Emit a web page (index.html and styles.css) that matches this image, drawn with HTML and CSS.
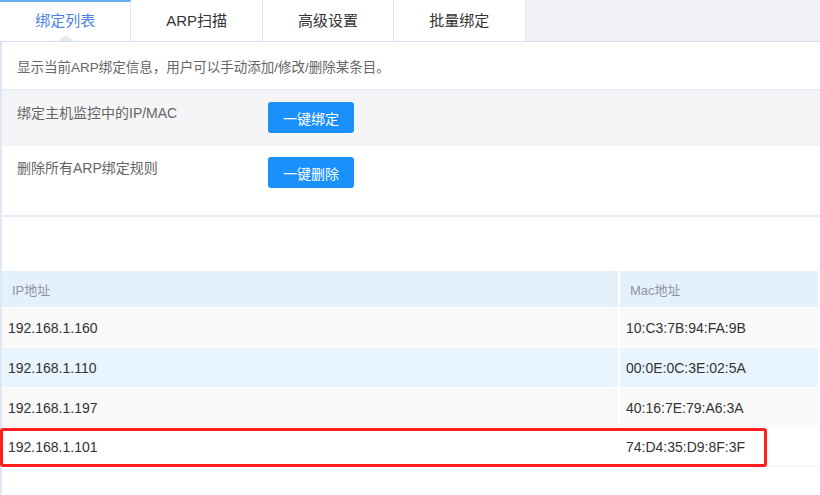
FILE: index.html
```html
<!DOCTYPE html>
<html lang="zh-CN">
<head>
<meta charset="utf-8">
<title>ARP绑定</title>
<link rel="stylesheet" href="styles.css">
</head>
<body>
<div class="tabs">
  <div class="tab active">绑定列表</div>
  <div class="tab">ARP扫描</div>
  <div class="tab">高级设置</div>
  <div class="tab">批量绑定</div>
</div>
<div class="panel">
  <div class="desc">显示当前ARP绑定信息，用户可以手动添加/修改/删除某条目。</div>
  <div class="actions">
    <div class="action gray">
      <div class="label">绑定主机监控中的IP/MAC</div>
      <button class="btn">一键绑定</button>
    </div>
    <div class="action white">
      <div class="label">删除所有ARP绑定规则</div>
      <button class="btn">一键删除</button>
    </div>
  </div>
  <div class="table-wrap">
    <table class="list">
      <thead>
        <tr><th class="c1">IP地址</th><th>Mac地址</th></tr>
      </thead>
      <tbody>
        <tr class="odd"><td>192.168.1.160</td><td>10:C3:7B:94:FA:9B</td></tr>
        <tr class="even"><td>192.168.1.110</td><td>00:0E:0C:3E:02:5A</td></tr>
        <tr class="odd"><td>192.168.1.197</td><td>40:16:7E:79:A6:3A</td></tr>
        <tr class="last"><td>192.168.1.101</td><td>74:D4:35:D9:8F:3F</td></tr>
      </tbody>
    </table>
    <div class="highlight"></div>
  </div>
</div>
</body>
</html>
```
FILE: styles.css
```css
* { box-sizing: border-box; }
html, body {
  margin: 0;
  padding: 0;
  background: #ffffff;
  font-family: "Liberation Sans", "Noto Sans CJK SC", sans-serif;
  color: #333;
  width: 820px;
  height: 495px;
  overflow: hidden;
}
.tabs {
  display: flex;
  height: 42px;
  background: #f0f1f5;
  border-bottom: 1px solid #d5def0;
}
.tab {
  position: relative;
  width: 131.4px;
  background: #ffffff;
  border-right: 1px solid #e3e6ed;
  font-size: 15px;
  color: #333;
  text-align: center;
  padding-top: 10px;
  line-height: 22px;
}
.tab.active {
  color: #4c82e2;
  border-top: 2px solid #6aaeea;
  padding-top: 8px;
}
.tab.active::after {
  content: "";
  position: absolute;
  left: 58px;
  bottom: 0;
  width: 0;
  height: 0;
  border-left: 8px solid transparent;
  border-right: 8px solid transparent;
  border-bottom: 6px solid #e6eaf3;
}
.panel {
  border-left: 2px solid #dfe6f6;
  height: 453px;
}
.desc {
  height: 49px;
  padding: 17px 0 0 15px;
  font-size: 13.5px;
  line-height: 18px;
  color: #666;
  border-bottom: 2px solid #e8edf8;
}
.actions {
  border-bottom: 2px solid #e8eef9;
}
.action {
  display: flex;
  align-items: flex-start;
}
.action.gray {
  background: #f5f5f8;
  height: 55px;
  padding-top: 11px;
}
.action.white {
  background: #ffffff;
  height: 69px;
  padding-top: 11px;
}
.label {
  width: 266px;
  padding-left: 15px;
  padding-top: 2px;
  font-size: 14px;
  line-height: 19px;
  color: #666;
}
.btn {
  width: 86px;
  height: 31px;
  border: none;
  border-radius: 3px;
  background: #1a90fb;
  color: #ffffff;
  font-family: "Liberation Sans", "Noto Sans CJK SC", sans-serif;
  font-size: 14px;
  padding: 0;
  cursor: pointer;
}
.table-wrap {
  position: relative;
  margin-top: 53px;
}
.list {
  width: 820px;
  border-collapse: separate;
  border-spacing: 2px 1px;
  margin-left: -2px;
}
.list th {
  height: 36px;
  background: #e4f0fa;
  text-align: left;
  font-weight: normal;
  font-size: 13px;
  color: #8d96a2;
  padding: 0 0 0 10px;
}
.list th.c1 { width: 616px; }
.list td {
  height: 39px;
  font-size: 14px;
  color: #333;
  padding: 0 0 0 6px;
}
.list tr.odd td { background: #f9f9f9; }
.list tr.even td { background: #e8f5fe; }
.list tr.last td {
  background: #ffffff;
  border-bottom: 1px solid #eeeeee;
}
.highlight {
  position: absolute;
  left: -2px;
  top: 158px;
  width: 767px;
  height: 39px;
  border: 3px solid #ff1f1f;
  border-radius: 3px;
  pointer-events: none;
}
```
